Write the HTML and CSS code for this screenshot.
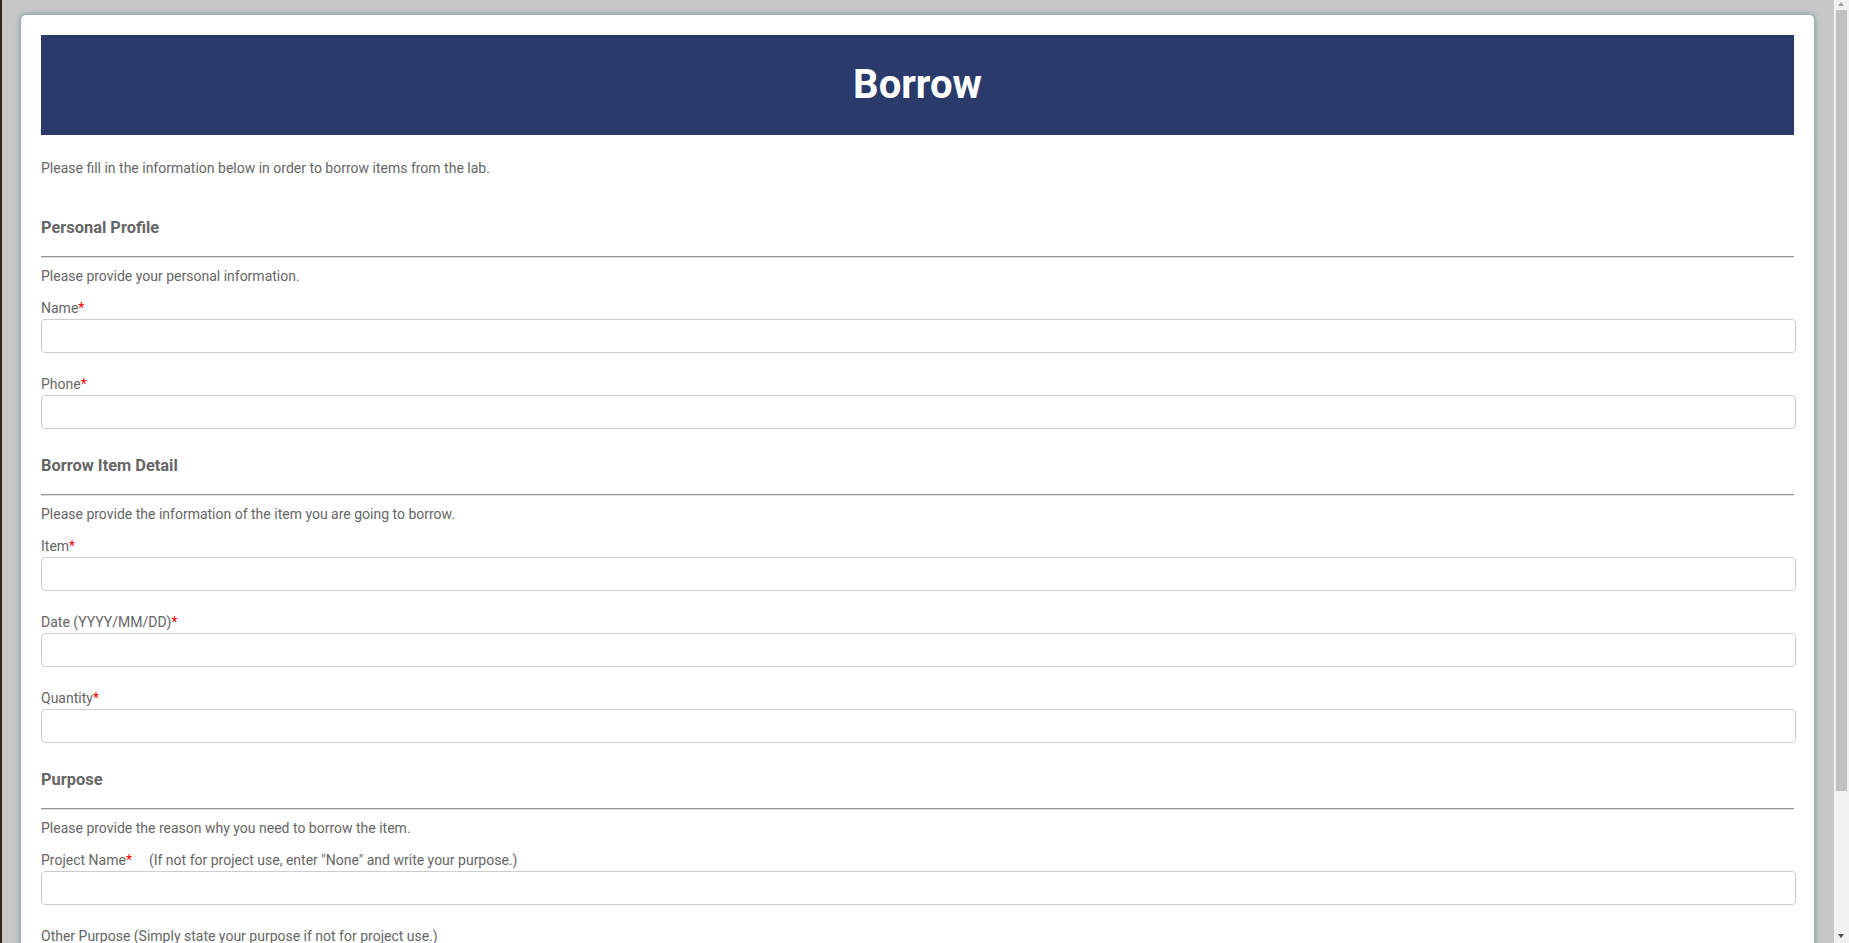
FILE: index.html
```html
<!DOCTYPE html>
<html lang="en">
<head>
<meta charset="utf-8">
<title>Borrow</title>
<link rel="stylesheet" href="styles.css">
</head>
<body>
<div class="card">
  <header class="banner"><h1 class="banner-title">Borrow</h1></header>
  <p class="intro">Please fill in the information below in order to borrow items from the lab.</p>

  <section class="section">
    <h2 class="section-title">Personal Profile</h2>
    <hr class="rule">
    <p class="section-desc">Please provide your personal information.</p>
    <div class="field">
      <label class="label">Name<span class="req">*</span></label>
      <input class="input" type="text">
    </div>
    <div class="field">
      <label class="label">Phone<span class="req">*</span></label>
      <input class="input" type="text">
    </div>
  </section>

  <section class="section">
    <h2 class="section-title">Borrow Item Detail</h2>
    <hr class="rule">
    <p class="section-desc">Please provide the information of the item you are going to borrow.</p>
    <div class="field">
      <label class="label">Item<span class="req">*</span></label>
      <input class="input" type="text">
    </div>
    <div class="field">
      <label class="label">Date (YYYY/MM/DD)<span class="req">*</span></label>
      <input class="input" type="text">
    </div>
    <div class="field">
      <label class="label">Quantity<span class="req">*</span></label>
      <input class="input" type="text">
    </div>
  </section>

  <section class="section">
    <h2 class="section-title">Purpose</h2>
    <hr class="rule">
    <p class="section-desc">Please provide the reason why you need to borrow the item.</p>
    <div class="field">
      <label class="label">Project Name<span class="req">*</span><span class="hint">(If not for project use, enter "None" and write your purpose.)</span></label>
      <input class="input" type="text">
    </div>
    <div class="field">
      <label class="label">Other Purpose (Simply state your purpose if not for project use.)</label>
      <textarea class="input textarea"></textarea>
    </div>
    <div class="actions">
      <button class="submit" type="button">Submit</button>
    </div>
  </section>
</div>

<div class="scrollbar" aria-hidden="true">
  <span class="scroll-arrow scroll-arrow-up"></span>
  <span class="scroll-thumb"></span>
  <span class="scroll-arrow scroll-arrow-down"></span>
</div>
</body>
</html>
```

FILE: styles.css
```css
html, body {
  margin: 0;
  padding: 0;
}

body {
  background: #c8c8c8;
  border-left: 2px solid #2d2622;
  padding: 15px 35px 3px 19px;
  font-family: Roboto, "Liberation Sans", Arial, sans-serif;
  color: #666666;
  font-size: 14px;
  line-height: 20px;
}

.card {
  background: #ffffff;
  border-radius: 5px;
  box-shadow: 0 0 5px 1px rgba(60, 120, 120, 0.55);
  padding: 20px;
}

.banner {
  background: #2a3b6b;
  height: 100px;
  display: flex;
  align-items: center;
  justify-content: center;
}

.banner-title {
  margin: 0;
  color: #ffffff;
  font-size: 40px;
  font-weight: 700;
  line-height: 48px;
}

.intro {
  margin: 23px 0 0 0;
}

.section {
  display: flex;
  flex-direction: column;
  margin-top: 27px;
}

.section:first-of-type {
  margin-top: 40px;
}

.section-title {
  margin: 0;
  font-size: 16.4px;
  line-height: 20px;
  font-weight: 700;
  color: #666666;
}

.rule {
  margin: 18px 0 0 0;
  border: 0;
  border-top: 1px solid #939393;
  border-bottom: 1px solid #e0e0e0;
  height: 0;
}

.section-desc {
  margin: 8px 0 0 0;
}

.field {
  display: flex;
  flex-direction: column;
  gap: 1px;
  margin-top: 21px;
}

.section-desc + .field {
  margin-top: 12px;
}

.label {
  display: block;
}

.req {
  color: #ff0000;
}

.hint {
  margin-left: 17px;
}

.input {
  box-sizing: border-box;
  width: calc(100% + 2px);
  height: 34px;
  border: 1px solid #cccccc;
  border-radius: 4px;
  background: #ffffff;
  padding: 6px 10px;
  font: inherit;
  color: #555555;
  margin: 0;
}

.textarea {
  height: 80px;
  resize: vertical;
  display: block;
}

.actions {
  margin-top: 20px;
}

.submit {
  background: #2a3b6b;
  color: #ffffff;
  border: 0;
  border-radius: 4px;
  padding: 8px 24px;
  font: inherit;
  font-weight: 700;
}

/* simulated classic scrollbar overlaying the right edge */
.scrollbar {
  position: fixed;
  top: 0;
  right: 0;
  width: 15px;
  height: 100vh;
  background: #f1f1f1;
}

.scroll-thumb {
  position: absolute;
  top: 10px;
  left: 2px;
  width: 11px;
  height: 781px;
  background: #c1c1c1;
}

.scroll-arrow {
  position: absolute;
  left: 4px;
  width: 0;
  height: 0;
  border-left: 3.5px solid transparent;
  border-right: 3.5px solid transparent;
}

.scroll-arrow-up {
  top: 2px;
  border-bottom: 4px solid #a3a3a3;
}

.scroll-arrow-down {
  bottom: 5px;
  border-top: 4px solid #505050;
}
```
